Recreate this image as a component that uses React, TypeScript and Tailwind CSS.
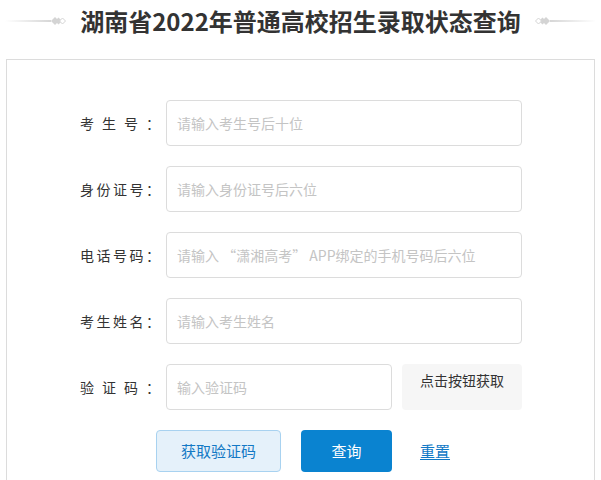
import { ReactNode } from "react";

const font = { fontFamily: '"Noto Sans CJK SC", "Noto Sans", sans-serif' };

const Ornament = ({ flip }: { flip?: boolean }) => (
  <div className={`flex items-center flex-1 ${flip ? "flex-row-reverse" : ""}`}>
    <div
      className={`h-[2px] flex-1 ${
        flip ? "bg-gradient-to-l" : "bg-gradient-to-r"
      } from-white to-[#d6d6d6]`}
    />
    <svg width="16" height="10" viewBox="0 0 16 10" className={flip ? "-scale-x-100" : ""}>
      <path d="M0 5 L4 1 L8 5 L4 9 Z" fill="#d4d4d4" />
      <path d="M4 5 L7.5 1.5 L11 5 L7.5 8.5 Z" fill="#d4d4d4" />
      <path d="M8.5 5 L11.5 2 L14.5 5 L11.5 8 Z" fill="white" stroke="#d4d4d4" strokeWidth="1" />
    </svg>
  </div>
);

const Label = ({ chars }: { chars: string[] }) => (
  <div className="w-[80px] flex justify-between text-[14px] text-[#333] shrink-0">
    {chars.map((c, i) => (
      <span key={i}>{c}</span>
    ))}
  </div>
);

const Row = ({ chars, children }: { chars: string[]; children: ReactNode }) => (
  <div className="flex items-center gap-[6px] h-[46px]">
    <Label chars={chars} />
    {children}
  </div>
);

const Field = ({ placeholder, w = "w-[356px]" }: { placeholder: string; w?: string }) => (
  <input
    placeholder={placeholder}
    className={`${w} h-[46px] rounded-[4px] border border-[#dcdcdc] px-[10px] text-[14px] text-[#333] placeholder:text-[#c4c4c4] outline-none`}
    style={font}
  />
);

export default function App() {
  return (
    <div className="w-[601px] h-[480px] bg-white overflow-hidden" style={font}>
      <div className="h-[42px] flex items-center px-[5px]">
        <Ornament />
        <h1 className="px-[13px] text-[24px] font-bold text-[#333] leading-none">
          湖南省2022年普通高校招生录取状态查询
        </h1>
        <Ornament flip />
      </div>

      <div className="mt-[17px] mx-[6px] border border-[#dcdcdc] pt-[40px] pl-[73px] pb-10">
        <div className="flex flex-col gap-5">
          <Row chars={["考", "生", "号", "："]}>
            <Field placeholder="请输入考生号后十位" />
          </Row>
          <Row chars={["身", "份", "证", "号", "："]}>
            <Field placeholder="请输入身份证号后六位" />
          </Row>
          <Row chars={["电", "话", "号", "码", "："]}>
            <Field placeholder="请输入 “潇湘高考” APP绑定的手机号码后六位" />
          </Row>
          <Row chars={["考", "生", "姓", "名", "："]}>
            <Field placeholder="请输入考生姓名" />
          </Row>
          <Row chars={["验", "证", "码", "："]}>
            <Field placeholder="输入验证码" w="w-[226px]" />
            <button className="ml-[4px] w-[120px] h-[46px] self-start rounded-[4px] bg-[#f6f6f6] text-[14px] text-[#333] pt-[6px] leading-5 flex justify-center items-start">
              点击按钮获取
            </button>
          </Row>
        </div>

        <div className="flex items-center mt-5 ml-[76px]">
          <button className="w-[125px] h-[42px] rounded-[4px] border border-[#a8d2f0] bg-[#e5f1fa] text-[15px] text-[#1379c5]">
            获取验证码
          </button>
          <button className="ml-5 w-[91px] h-[42px] rounded-[4px] bg-[#0a83d0] text-[15px] text-white">
            查询
          </button>
          <a className="ml-[28px] text-[15px] text-[#0f78c6] underline underline-offset-2">重置</a>
        </div>
      </div>
    </div>
  );
}
